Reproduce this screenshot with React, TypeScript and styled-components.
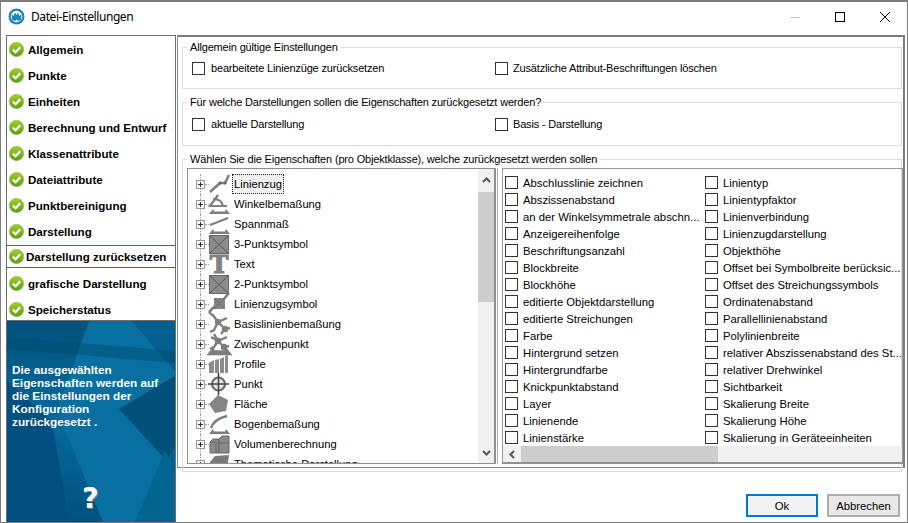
import React from "react";
import styled, { createGlobalStyle } from "styled-components";

const Global = createGlobalStyle`
  html, body { margin: 0; padding: 0; background: #fff; }
  * { box-sizing: border-box; }
  body { font-family: "Liberation Sans", Arial, sans-serif; font-size: 11.3px; color: #000; }
`;

const Window = styled.div`
  width: 908px; height: 523px; border: 1px solid #7d7d7d; border-top-width: 2px;
  display: flex; flex-direction: column; overflow: hidden; background: #fff;
`;
const TitleBar = styled.div`
  height: 33px; flex: none; display: flex; align-items: center; padding-left: 7px;
`;
const TitleText = styled.span`
  font-family: "Noto Sans", sans-serif; font-size: 12px; letter-spacing: -0.42px; margin-left: 6px; flex: 1; padding-bottom: 4px;
`;
const Controls = styled.div`
  display: flex; width: 135px; height: 100%; padding-bottom: 4px;
`;
const ControlSlot = styled.div`
  width: 45px; display: flex; align-items: center; justify-content: center;
`;
const Body = styled.div`
  flex: 1; display: flex; padding-left: 5px; min-height: 0;
`;
const Sidebar = styled.div`
  width: 170px; flex: none; display: flex; flex-direction: column; border-left: 1px solid #6e6e6e;
  border-right: 1px solid #6e6e6e; margin-right: 1px;
`;
const NavList = styled.div`
  height: 286px; flex: none; border-top: 1px solid #6e6e6e; border-bottom: 1px solid #6e6e6e;
  background: #fff;
`;
const NavRow = styled.div<{ $active?: boolean }>`
  display: flex; align-items: center; padding-left: 2px; white-space: nowrap;
  font-weight: bold; font-size: 11.6px; gap: ${(p) => (p.$active ? "2px" : "4px")};
  height: ${(p) => (p.$active ? "23px" : "26px")};
  margin: ${(p) => (p.$active ? "1px 0 2px" : "0")};
  border-top: ${(p) => (p.$active ? "1px solid #0078d7" : "none")};
  border-bottom: ${(p) => (p.$active ? "1px solid #0078d7" : "none")};
`;
const Hint = styled.div`
  position: relative; flex: 1; overflow: hidden; background: #035d8c; color: #fff;
  padding: 43px 0 0 5px;
`;
const HintArt = styled.svg`
  position: absolute; left: 0; top: 0; width: 168px; height: 201px;
`;
const HintText = styled.div`
  position: relative; font-weight: bold; font-size: 11.8px; line-height: 13px; white-space: nowrap;
`;
const HelpMark = styled.div`
  position: relative; margin-top: 54px; margin-left: 70px; font-family: "DejaVu Sans", sans-serif;
  font-weight: bold; font-size: 29px; line-height: 30px; color: #fff; text-shadow: 1px 1px 0 #777;
`;
const Main = styled.div`
  flex: 1; display: flex; flex-direction: column; min-width: 0;
`;
const Panel = styled.div`
  width: 728px; height: 433px; flex: none; border-top: 2px solid #7c7c7c; border-right: 2px solid #7c7c7c;
  border-bottom: 1px solid #8a8a8a; border-left: 1px solid #8a8a8a; padding: 4px 2px 0 4px;
`;
const Group = styled.fieldset<{ $h: number }>`
  margin: 0 0 7px; padding: 0 0 0 9px; border: 1px solid #dcdcdc; height: ${(p) => p.$h}px;
  min-width: 0; width: 720px; font-size: 11px; letter-spacing: -0.17px;
`;
const Legend = styled.legend`
  margin-left: -5px; padding: 0 2px 0 3px; line-height: 13px;
`;
const CheckRow = styled.div<{ $top: number }>`
  display: grid; grid-template-columns: 303px 1fr; padding-top: ${(p) => p.$top}px;
`;
const CheckLabel = styled.label`
  display: flex; align-items: center; white-space: nowrap; height: 14px;
`;
const Box = styled.span<{ $gap: number }>`
  width: 13px; height: 13px; flex: none; background: #fff; border: 1px solid #333; margin-right: ${(p) => p.$gap}px;
`;
const Split = styled.div`
  display: flex; margin: 2px 0 0 -5px; width: 721px; height: 296px; font-size: 11.3px; letter-spacing: 0;
`;
const Tree = styled.div`
  width: 309px; flex: none; border: 1px solid #8f8f98; border-right-width: 2px; display: flex; overflow: hidden;
`;
const TreeRows = styled.div`
  flex: 1; padding-top: 5px; overflow: hidden; position: relative; font-size: 11.2px;
`;
const TreeRow = styled.div`
  position: relative; height: 20px; display: flex; align-items: center; padding-left: 8px; white-space: nowrap;
  &::before {
    content: ""; position: absolute; left: 12px; top: 0; bottom: 0; border-left: 1px dotted #a0a0a0;
  }
`;
const Expander = styled.span`
  position: relative; z-index: 1; width: 9px; height: 9px; flex: none; border: 1px solid #9a9a9a; background: #f4f4f4;
  &::before { content: ""; position: absolute; left: 1px; right: 1px; top: 3px; height: 1px; background: #333; }
  &::after { content: ""; position: absolute; top: 1px; bottom: 1px; left: 3px; width: 1px; background: #333; }
`;
const Dots = styled.span`
  width: 4px; flex: none; border-top: 1px dotted #a0a0a0;
`;
const TreeIcon = styled.svg`
  width: 22px; height: 20px; flex: none; margin-right: 1px; overflow: visible;
`;
const TreeLabel = styled.span<{ $selected?: boolean }>`
  display: flex; align-items: center; height: 20px; padding: 0 2px;
  background: ${(p) => (p.$selected ? "#f0f0f0" : "transparent")};
  outline: ${(p) => (p.$selected ? "1px dotted #222" : "none")}; outline-offset: -1px;
`;
const VBar = styled.div`
  width: 16px; flex: none; background: #f0f0f0; display: flex; flex-direction: column;
`;
const BarBtn = styled.div<{ $h: number }>`
  flex: none; height: ${(p) => p.$h}px; display: flex; align-items: center; justify-content: center;
`;
const VThumb = styled.div`
  height: 110px; flex: none; background: #cdcdcd;
`;
const Grow = styled.div`
  flex: 1;
`;
const Splitter = styled.div`
  width: 1px; flex: none; margin: 0 4px 0 1px; background: #b0b0b0;
`;
const CheckList = styled.div`
  width: 401px; flex: none; border-left: 1px solid #9a9a9a; border-right: 1px solid #9a9a9a;
  border-bottom: 2px solid #8f8f98; border-top: 1px solid #9a9a9a; display: flex; flex-direction: column;
`;
const Columns = styled.div`
  flex: 1; display: grid; grid-template-columns: 200px 1fr; padding: 5px 0 0 2px;
`;
const Col = styled.div`
  display: flex; flex-direction: column;
`;
const Item = styled.div`
  height: 17px; display: flex; align-items: center; white-space: nowrap; overflow: hidden;
`;
const HBar = styled.div`
  height: 16px; flex: none; background: #f0f0f0; display: flex;
`;
const HBtn = styled.div`
  width: 18px; display: flex; align-items: center; justify-content: center;
`;
const HThumb = styled.div`
  width: 197px; background: #cdcdcd;
`;
const Footer = styled.div`
  display: flex; justify-content: flex-end; gap: 9px; padding: 26px 7px 0 0;
`;
const Btn = styled.button<{ $primary?: boolean }>`
  width: ${(p) => (p.$primary ? "72px" : "73px")}; height: 23px; padding: 0; font: inherit; color: #000;
  background: ${(p) => (p.$primary ? "#f2f2f2" : "#e8e8e8")};
  border: 2px solid ${(p) => (p.$primary ? "#0078d7" : "#adadad")};
`;

const Check = () => (
  <svg width="15" height="15" viewBox="0 0 15 15" style={{ flex: "none" }}>
    <defs>
      <linearGradient id="g" x1="0" y1="0" x2="0" y2="1">
        <stop offset="0" stopColor="#a3cf2a" />
        <stop offset="1" stopColor="#5c9c12" />
      </linearGradient>
    </defs>
    <circle cx="7.5" cy="7.5" r="7.2" fill="url(#g)" stroke="#8fb56a" strokeWidth="0.6" />
    <path d="M3.8 7.6 L6.6 10.2 L11.2 5.2" fill="none" stroke="#fff" strokeWidth="2.2" />
  </svg>
);

const G = "#7e7e7e";
const Base = () => <path d="M0 20 L4 15 L5 17.5 L16 17.5 L17 15 L21 20 Z" fill={G} />;
const SymbolRect = () => (
  <g>
    <rect x="0.5" y="1.5" width="19" height="18" fill="#8c8c8c" stroke="#6a6a6a" />
    <path d="M0.5 1.5 L19.5 19.5 M19.5 1.5 L0.5 19.5" stroke="#555" strokeWidth="1" />
  </g>
);
const icons: React.ReactNode[] = [
  <g><path d="M1 18 L11 9 L16 9 L20 1" fill="none" stroke={G} strokeWidth="2.6" /><circle cx="11" cy="9" r="1.5" fill="#666" /><circle cx="16" cy="9" r="1.5" fill="#666" /></g>,
  <g><path d="M9 1 L1 12 L18 12 M4 5 Q13 5 14 12" fill="none" stroke={G} strokeWidth="2.2" /><Base /></g>,
  <g><path d="M1 11 L19 4" stroke={G} strokeWidth="2.4" /><Base /></g>,
  <SymbolRect />,
  <text x="10" y="19" textAnchor="middle" fontFamily="DejaVu Serif, serif" fontWeight="bold" fontSize="25" fill="#808080" stroke="#808080" strokeWidth="1">T</text>,
  <SymbolRect />,
  <g><path d="M0 18 L6 12 M14 6 L20 -1" stroke={G} strokeWidth="2.6" /><rect x="5" y="4" width="11" height="11" fill="#858585" /><path d="M5 4 L16 15 M16 4 L5 15" stroke="#666" /><path d="M0 18 L3 21" stroke={G} strokeWidth="2.4" /></g>,
  <g fill="none" stroke={G} strokeWidth="2.4"><path d="M3 0 L9 8 L18 4 M9 8 L5 16 L1 18 M9 8 L16 15 L21 14 M16 15 L12 20" /><circle cx="9" cy="8" r="2" fill={G} /><circle cx="16" cy="15" r="2" fill={G} /></g>,
  <g fill="none" stroke={G} strokeWidth="2.4"><path d="M5 0 L9 7 L18 3 M9 7 L5 13 L1 15 M9 7 L15 13 L20 12 M2 3 L9 7" /><circle cx="9" cy="7" r="2" fill={G} /><circle cx="15" cy="13" r="2" fill={G} /><Base /></g>,
  <path d="M0 19 L0 9 L5 6 L5 19 Z M6 19 L6 6 L10 5 L10 19 Z M11 19 L11 5 L15 3 L15 19 Z M16 19 L16 2 L19 1 L19 19 Z" fill="#8c8c8c" />,
  <g><circle cx="9.5" cy="10" r="6.5" fill="#bbb" fillOpacity="0.35" stroke="#6c6c6c" strokeWidth="2.2" /><path d="M9.5 -1 V21 M-1 10 H20" stroke="#444" strokeWidth="1.6" /></g>,
  <path d="M9 1 L19 6 L17 17 L6 19 L0 10 Z" fill="#858585" />,
  <g><path d="M2 14 Q5 5 18 2" fill="none" stroke={G} strokeWidth="2.4" /><Base /></g>,
  <g fill="#8a8a8a" stroke="#666" strokeWidth="1"><path d="M1 8 L4 5 L10 5 L10 19 L1 19 Z" /><path d="M10 5 L13 2 L20 2 L20 19 L10 19 Z" /><path d="M1 8 H7 V19 M10 9 H20" fill="none" /></g>,
  <path d="M1 8 L6 2 L20 1 L19 8 L19 20 L1 20 Z" fill="#7a7a7a" />,
];
const treeItems = ["Linienzug", "Winkelbemaßung", "Spannmaß", "3-Punktsymbol", "Text", "2-Punktsymbol", "Linienzugsymbol", "Basislinienbemaßung", "Zwischenpunkt", "Profile", "Punkt", "Fläche", "Bogenbemaßung", "Volumenberechnung", "Thematische Darstellung"];
const nav = ["Allgemein", "Punkte", "Einheiten", "Berechnung und Entwurf", "Klassenattribute", "Dateiattribute", "Punktbereinigung", "Darstellung", "Darstellung zurücksetzen", "grafische Darstellung", "Speicherstatus"];
const colA = ["Abschlusslinie zeichnen", "Abszissenabstand", "an der Winkelsymmetrale abschn...", "Anzeigereihenfolge", "Beschriftungsanzahl", "Blockbreite", "Blockhöhe", "editierte Objektdarstellung", "editierte Streichungen", "Farbe", "Hintergrund setzen", "Hintergrundfarbe", "Knickpunktabstand", "Layer", "Linienende", "Linienstärke"];
const colB = ["Linientyp", "Linientypfaktor", "Linienverbindung", "Linienzugdarstellung", "Objekthöhe", "Offset bei Symbolbreite berücksic...", "Offset des Streichungssymbols", "Ordinatenabstand", "Parallellinienabstand", "Polylinienbreite", "relativer Abszissenabstand des St...", "relativer Drehwinkel", "Sichtbarkeit", "Skalierung Breite", "Skalierung Höhe", "Skalierung in Geräteeinheiten"];

const Chevron = ({ d }: { d: string }) => (
  <svg width="9" height="9" viewBox="0 0 9 9"><path d={d} fill="none" stroke="#555" strokeWidth="2" /></svg>
);

export default function App() {
  return (
    <>
      <Global />
      <Window>
        <TitleBar>
          <svg width="17" height="17" viewBox="0 0 17 17" style={{ marginBottom: 4 }}>
            <circle cx="8.5" cy="8.5" r="8" fill="#1b85b8" />
            <circle cx="8.5" cy="8.5" r="5.8" fill="#fff" />
            <path d="M3.5 6 L5.5 8 L7 4.5 L8.5 7 L10 4.5 L11.5 8 L13.5 6 L13 12 L10 13 L8.5 11.5 L7 13 L4 12 Z" fill="#1b85b8" />
          </svg>
          <TitleText>Datei-Einstellungen</TitleText>
          <Controls>
            <ControlSlot><svg width="10" height="10"><path d="M0 5.5 H10" stroke="#c8c8c8" /></svg></ControlSlot>
            <ControlSlot><svg width="10" height="10"><rect x="0.5" y="0.5" width="9" height="9" fill="none" stroke="#000" /></svg></ControlSlot>
            <ControlSlot><svg width="10" height="10"><path d="M0 0 L10 10 M10 0 L0 10" stroke="#000" /></svg></ControlSlot>
          </Controls>
        </TitleBar>
        <Body>
          <Sidebar>
            <NavList>
              {nav.map((n) => (
                <NavRow key={n} $active={n === "Darstellung zurücksetzen"}>
                  <Check />
                  {n}
                </NavRow>
              ))}
            </NavList>
            <Hint>
              <HintArt viewBox="0 0 168 201">
                <defs>
                  <linearGradient id="b" x1="0" y1="0" x2="0" y2="1">
                    <stop offset="0" stopColor="#01527c" />
                    <stop offset="0.5" stopColor="#046a9c" />
                    <stop offset="1" stopColor="#01517e" />
                  </linearGradient>
                </defs>
                <rect width="168" height="201" fill="url(#b)" />
                <path d="M82 0 L125 0 L168 50 L168 55 L112 88 L160 140 L150 160 L128 201 L96 201 L50 90 Z" fill="#086fa1" />
                <path d="M125 0 L168 0 L168 50 Z" fill="#01608f" />
                <path d="M112 88 L168 55 L168 125 L160 140 Z" fill="#01507a" />
                <path d="M0 60 L45 100 L62 201 L0 201 Z" fill="#015080" />
                <path d="M0 16 L168 30 L168 42 L0 28 Z" fill="#014a6f" fillOpacity="0.45" />
                <path d="M128 201 L158 130 L168 150 L168 201 Z" fill="#02648f" />
              </HintArt>
              <HintText>
                Die ausgewählten<br />Eigenschaften werden auf<br />die Einstellungen der<br />Konfiguration<br />zurückgesetzt .
              </HintText>
              <HelpMark>?</HelpMark>
            </Hint>
          </Sidebar>
          <Main>
            <Panel>
              <Group $h={48}>
                <Legend>Allgemein gültige Einstellungen</Legend>
                <CheckRow $top={7}>
                  <CheckLabel><Box $gap={6} />bearbeitete Linienzüge zurücksetzen</CheckLabel>
                  <CheckLabel><Box $gap={5} />Zusätzliche Attribut-Beschriftungen löschen</CheckLabel>
                </CheckRow>
              </Group>
              <Group $h={50}>
                <Legend>Für welche Darstellungen sollen die Eigenschaften zurückgesetzt werden?</Legend>
                <CheckRow $top={8}>
                  <CheckLabel><Box $gap={6} />aktuelle Darstellung</CheckLabel>
                  <CheckLabel><Box $gap={5} />Basis - Darstellung</CheckLabel>
                </CheckRow>
              </Group>
              <Group $h={319}>
                <Legend>Wählen Sie die Eigenschaften (pro Objektklasse), welche zurückgesetzt werden sollen</Legend>
                <Split>
                  <Tree>
                    <TreeRows>
                      {treeItems.map((t, i) => (
                        <TreeRow key={t}>
                          <Expander />
                          <Dots />
                          <TreeIcon viewBox="0 0 22 20">{icons[i]}</TreeIcon>
                          <TreeLabel $selected={i === 0}>{t}</TreeLabel>
                        </TreeRow>
                      ))}
                    </TreeRows>
                    <VBar>
                      <BarBtn $h={23}><Chevron d="M1 6 L4.5 2.5 L8 6" /></BarBtn>
                      <VThumb />
                      <Grow />
                      <BarBtn $h={22}><Chevron d="M1 3 L4.5 6.5 L8 3" /></BarBtn>
                    </VBar>
                  </Tree>
                  <Splitter />
                  <CheckList>
                    <Columns>
                      {[colA, colB].map((c, idx) => (
                        <Col key={idx}>
                          {c.map((t) => (
                            <Item key={t}><Box $gap={5} />{t}</Item>
                          ))}
                        </Col>
                      ))}
                    </Columns>
                    <HBar>
                      <HBtn><Chevron d="M6 1 L2.5 4.5 L6 8" /></HBtn>
                      <HThumb />
                    </HBar>
                  </CheckList>
                </Split>
              </Group>
            </Panel>
            <Footer>
              <Btn $primary>Ok</Btn>
              <Btn>Abbrechen</Btn>
            </Footer>
          </Main>
        </Body>
      </Window>
    </>
  );
}
